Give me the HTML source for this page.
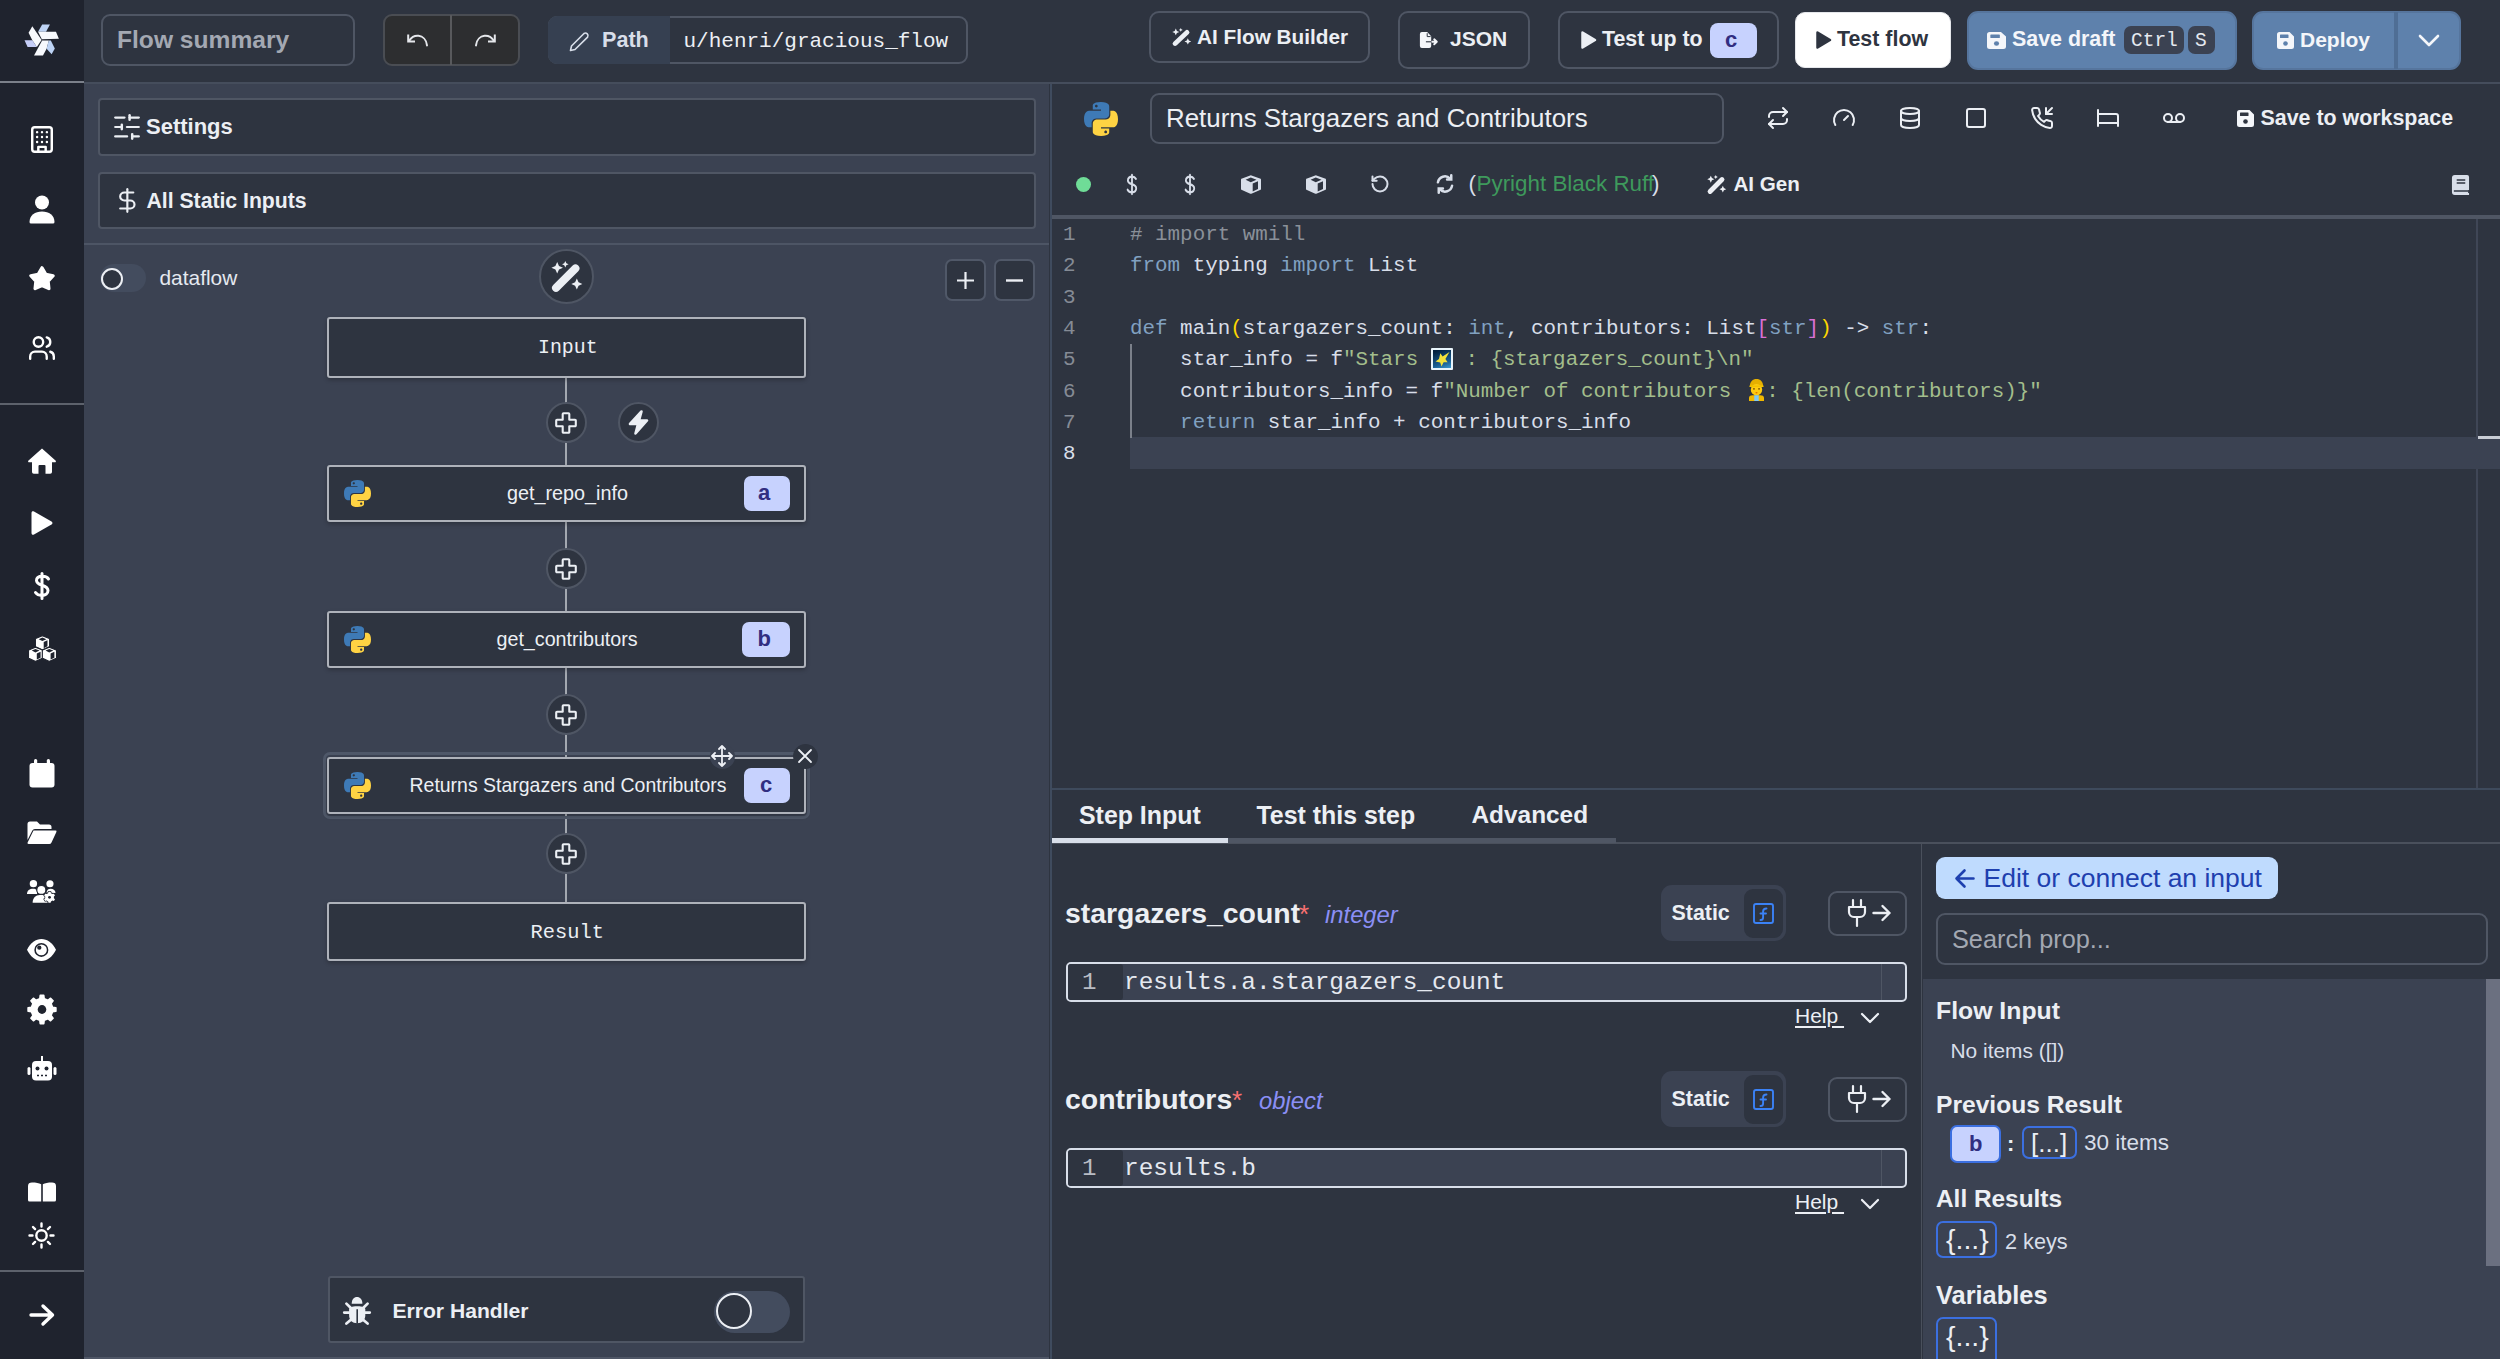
<!DOCTYPE html><html><head><meta charset="utf-8"><title>Flow editor</title>
<style>
html,body{margin:0;padding:0;}
body{width:2500px;height:1359px;overflow:hidden;position:relative;background:#2e3440;font-family:"Liberation Sans",sans-serif;}
.t{position:absolute;line-height:1;white-space:pre;}
.b{position:absolute;box-sizing:border-box;}
.i{position:absolute;overflow:visible;}
</style></head><body>
<div class="b" style="left:0px;top:0px;width:84px;height:1359px;background:#1f232e;"></div>
<div class="b" style="left:0px;top:81px;width:84px;height:2px;background:#7b808a;"></div>
<div class="b" style="left:0px;top:403px;width:84px;height:2px;background:#5d626c;"></div>
<div class="b" style="left:0px;top:1270px;width:84px;height:2px;background:#5d626c;"></div>
<svg class="i" style="left:22px;top:22px;" viewBox="0 0 1431 1359" width="40" height="38" preserveAspectRatio="none" fill="none"><path fill="#bdd3f5" d="M720 90 L1000 90 L860 350 L575 350 Z"/>
<path fill="#f7f9fd" d="M575 350 L1215 350 L1320 600 L710 615 Z"/>
<path fill="#f7f9fd" d="M370 150 L700 640 L530 890 L370 650 L235 385 Z"/>
<path fill="#c5cdf7" d="M90 650 L370 650 L530 890 L200 895 Z"/>
<path fill="#f7f9fd" d="M720 660 L960 660 L880 955 L750 1200 L430 1200 Z"/>
<path fill="#bdd3f5" d="M960 660 L1030 660 L1175 950 L1060 1150 L880 955 Z"/></svg>
<div class="b" style="left:84px;top:0px;width:2416px;height:82px;background:#2e3440;"></div>
<div class="b" style="left:84px;top:82px;width:2416px;height:2px;background:#454d5c;"></div>
<div class="b" style="left:101px;top:14px;width:254px;height:52px;background:#2e3440;border:2px solid #4f5664;border-radius:9px;"></div>
<div class="t" style="left:117.00px;top:28.17px;font-size:24.6px;color:#a3a8b2;font-weight:700;">Flow summary</div>
<div class="b" style="left:383px;top:14px;width:137px;height:52px;background:#2d2e30;border:2px solid #4a4d53;border-radius:9px;"></div>
<div class="b" style="left:450px;top:15px;width:2px;height:50px;background:#58595c;"></div>
<svg class="i" style="left:405px;top:32px;" viewBox="0 0 25 16" width="25" height="16" preserveAspectRatio="none" fill="none" stroke="#e5e7eb" stroke-width="2" stroke-linecap="round" stroke-linejoin="round"><path d="M3.2 2.4 V9.6 H10" stroke-linecap="butt" stroke-linejoin="miter"/><path d="M4.2 8.6 C7 4.5 11 3.5 13.5 3.8 C17.5 4.3 21.5 7.5 22 13.4"/></svg>
<svg class="i" style="left:473px;top:32px;" viewBox="0 0 25 16" width="25" height="16" preserveAspectRatio="none" fill="none" stroke="#e5e7eb" stroke-width="2" stroke-linecap="round" stroke-linejoin="round"><path d="M21.8 2.4 V9.6 H15" stroke-linecap="butt" stroke-linejoin="miter"/><path d="M20.8 8.6 C18 4.5 14 3.5 11.5 3.8 C7.5 4.3 3.5 7.5 3 13.4"/></svg>
<div class="b" style="left:548px;top:16px;width:420px;height:48px;background:#2e3440;border:2px solid #4f5664;border-radius:9px;"></div>
<div class="b" style="left:548px;top:16px;width:122px;height:48px;background:#364051;border-radius:9px;border-top-right-radius:0;border-bottom-right-radius:0;"></div>
<svg class="i" style="left:569px;top:31px;" viewBox="0 0 21 20" width="21" height="20" preserveAspectRatio="none" fill="none" stroke="#d8dee9" stroke-width="1.6" stroke-linecap="round" stroke-linejoin="round"><path d="M15 2.5 a2.6 2.6 0 0 1 3.6 3.6 L6 18.5 L1.5 19.5 L2.5 15 Z"/></svg>
<div class="t" style="left:602.00px;top:28.71px;font-size:21.6px;color:#d8dee9;font-weight:700;">Path</div>
<div class="t" style="left:683.50px;top:31.41px;font-size:21.0px;color:#eceff4;font-family:'Liberation Mono', monospace;">u/henri/gracious_flow</div>
<div class="b" style="left:1149px;top:11px;width:221px;height:52px;background:#2e3440;border:2px solid #4f5664;border-radius:10px;"></div>
<svg class="i" style="left:1172px;top:28px;" viewBox="0 0 18 18" width="19" height="18" preserveAspectRatio="none" fill="#eceff4" stroke="#eceff4" stroke-width="1" stroke-linecap="round" stroke-linejoin="round"><path d="M2.9 15.6 L14.2 4.3" stroke-width="4.6" stroke-linecap="round"/>
<path d="M3.6 0.6 l1.05 2.3 2.3 1.05 -2.3 1.05 -1.05 2.3 -1.05 -2.3 -2.3 -1.05 2.3 -1.05z M8.3 0 l.6 1.3 1.3.6 -1.3.6 -.6 1.3 -.6 -1.3 -1.3 -.6 1.3 -.6z M15 10.2 l1 2.2 2.2 1 -2.2 1 -1 2.2 -1 -2.2 -2.2 -1 2.2 -1z" stroke="none"/></svg>
<div class="t" style="left:1197.00px;top:26.73px;font-size:20.75px;color:#eceff4;font-weight:700;">AI Flow Builder</div>
<div class="b" style="left:1398px;top:11px;width:132px;height:58px;background:#2e3440;border:2px solid #4f5664;border-radius:10px;"></div>
<svg class="i" style="left:1418px;top:30px;" viewBox="0 0 22 19" width="22" height="19" preserveAspectRatio="none" fill="none"><path d="M3.9 2 H9.2 L13.2 6.3 V16 A2 2 0 0 1 11.2 18 H3.9 A2 2 0 0 1 1.9 16 V4 A2 2 0 0 1 3.9 2z" fill="#f4f6fa"/><path d="M9.2 3.2 V6.6 H12.6" stroke="#2e3440" stroke-width="1" fill="none"/><path d="M7.9 11.8 H14" stroke="#2e3440" stroke-width="1.1"/><path d="M14.3 11.8 H18.6 M16.2 9.3 L18.8 11.8 L16.2 14.3" stroke="#f4f6fa" stroke-width="1.9" fill="none" stroke-linecap="round" stroke-linejoin="round"/></svg>
<div class="t" style="left:1450.00px;top:28.22px;font-size:21.0px;color:#eceff4;font-weight:700;">JSON</div>
<div class="b" style="left:1558px;top:11px;width:221px;height:58px;background:#2e3440;border:2px solid #4f5664;border-radius:10px;"></div>
<svg class="i" style="left:1581px;top:31px;" viewBox="0 0 15 18" width="15" height="18" preserveAspectRatio="none" fill="#eceff4" stroke="#eceff4" stroke-width="2.5" stroke-linecap="round" stroke-linejoin="round"><path d="M1.5 1.5 L14 9 L1.5 16.5 Z" stroke-linejoin="round"/></svg>
<div class="t" style="left:1602.00px;top:29.38px;font-size:21.4px;color:#eceff4;font-weight:700;">Test up to</div>
<div class="b" style="left:1710px;top:23px;width:47px;height:35px;background:#c7d2fe;border-radius:8px;"></div>
<div class="t" style="left:1725.00px;top:29.37px;font-size:22px;color:#312e81;font-weight:700;">c</div>
<div class="b" style="left:1795px;top:12px;width:156px;height:56px;background:#ffffff;border:1px solid #e5e7eb;border-radius:10px;"></div>
<svg class="i" style="left:1816px;top:31px;" viewBox="0 0 15 18" width="15" height="18" preserveAspectRatio="none" fill="#2e3440" stroke="#2e3440" stroke-width="2.5" stroke-linecap="round" stroke-linejoin="round"><path d="M1.5 1.5 L14 9 L1.5 16.5 Z"/></svg>
<div class="t" style="left:1837.00px;top:29.38px;font-size:21.4px;color:#2e3440;font-weight:700;">Test flow</div>
<div class="b" style="left:1967px;top:11px;width:270px;height:59px;background:#5e81ac;border:2px solid #56759d;border-radius:11px;"></div>
<svg class="i" style="left:1987px;top:32px;" viewBox="0 0 17 17" width="19" height="17" preserveAspectRatio="none" fill="none"><path d="M0 2.5 a2.5 2.5 0 0 1 2.5 -2.5 h10 l4.5 4.5 v10 a2.5 2.5 0 0 1 -2.5 2.5 h-12 a2.5 2.5 0 0 1 -2.5 -2.5z" fill="#f4f6fa"/><rect x="3" y="2.5" width="8.5" height="3.5" rx=".6" fill="#5e81ac"/><circle cx="8.5" cy="11.5" r="2.3" fill="#5e81ac"/></svg>
<div class="t" style="left:2012.00px;top:28.68px;font-size:21.4px;color:#f4f6fa;font-weight:700;">Save draft</div>
<div class="b" style="left:2124px;top:26px;width:60px;height:28px;background:#3b4252;border-radius:7px;"></div>
<div class="t" style="left:2131.00px;top:32.06px;font-size:19.5px;color:#e5e9f0;font-family:'Liberation Mono', monospace;">Ctrl</div>
<div class="b" style="left:2188px;top:26px;width:27px;height:28px;background:#3b4252;border-radius:7px;"></div>
<div class="t" style="left:2195.00px;top:32.06px;font-size:19.5px;color:#e5e9f0;font-family:'Liberation Mono', monospace;">S</div>
<div class="b" style="left:2252px;top:11px;width:209px;height:59px;background:#5e81ac;border:2px solid #56759d;border-radius:11px;"></div>
<div class="b" style="left:2394px;top:12px;width:4px;height:57px;background:#4f6e95;"></div>
<svg class="i" style="left:2277px;top:32px;" viewBox="0 0 17 17" width="17" height="17" preserveAspectRatio="none" fill="none"><path d="M0 2.5 a2.5 2.5 0 0 1 2.5 -2.5 h10 l4.5 4.5 v10 a2.5 2.5 0 0 1 -2.5 2.5 h-12 a2.5 2.5 0 0 1 -2.5 -2.5z" fill="#f4f6fa"/><rect x="3" y="2.5" width="8.5" height="3.5" rx=".6" fill="#5e81ac"/><circle cx="8.5" cy="11.5" r="2.3" fill="#5e81ac"/></svg>
<div class="t" style="left:2300.00px;top:29.02px;font-size:21.0px;color:#f4f6fa;font-weight:700;">Deploy</div>
<svg class="i" style="left:2418px;top:34px;" viewBox="0 0 22 13" width="22" height="13" preserveAspectRatio="none" fill="none" stroke="#f4f6fa" stroke-width="2.6" stroke-linecap="round" stroke-linejoin="round"><path d="M2 2 L11 11 L20 2"/></svg>
<div class="b" style="left:84px;top:84px;width:965px;height:1275px;background:#3b4252;"></div>
<div class="b" style="left:1049.5px;top:84px;width:2.5px;height:1275px;background:#3f4b5e;"></div>
<div class="b" style="left:98px;top:98px;width:938px;height:58px;background:#2e3440;border:2px solid #4f5664;border-radius:4px;"></div>
<svg class="i" style="left:114px;top:114px;" viewBox="2 1 20 22" width="26" height="26" preserveAspectRatio="none" fill="none" stroke="#eceff4" stroke-width="1.9" stroke-linecap="round" stroke-linejoin="round"><line x1="21" x2="14" y1="4" y2="4"/><line x1="10" x2="3" y1="4" y2="4"/><line x1="21" x2="12" y1="12" y2="12"/><line x1="8" x2="3" y1="12" y2="12"/><line x1="21" x2="16" y1="20" y2="20"/><line x1="12" x2="3" y1="20" y2="20"/><line x1="14" x2="14" y1="2" y2="6"/><line x1="8" x2="8" y1="10" y2="14"/><line x1="16" x2="16" y1="18" y2="22"/></svg>
<div class="t" style="left:146.00px;top:115.67px;font-size:22.0px;color:#eceff4;font-weight:700;">Settings</div>
<div class="b" style="left:98px;top:172px;width:938px;height:57px;background:#2e3440;border:2px solid #4f5664;border-radius:4px;"></div>
<svg class="i" style="left:118.5px;top:188px;" viewBox="5 1 13 22" width="15.5" height="25" preserveAspectRatio="none" fill="none" stroke="#eceff4" stroke-width="1.8" stroke-linecap="round" stroke-linejoin="round"><line x1="12" x2="12" y1="2" y2="22"/><path d="M17 5H9.5a3.5 3.5 0 0 0 0 7h5a3.5 3.5 0 0 1 0 7H6"/></svg>
<div class="t" style="left:146.50px;top:189.55px;font-size:21.2px;color:#eceff4;font-weight:700;">All Static Inputs</div>
<div class="b" style="left:84px;top:243px;width:965px;height:2px;background:#4d5565;"></div>
<div class="b" style="left:100px;top:264px;width:46px;height:28px;background:#434c5e;border-radius:14px;"></div>
<div class="b" style="left:100.5px;top:267.5px;width:22px;height:22px;border-radius:50%;background:#2e3440;border:2.2px solid #eceff4;"></div>
<div class="t" style="left:159.50px;top:267.80px;font-size:20.9px;color:#e5e9f0;">dataflow</div>
<div class="b" style="left:539px;top:249px;width:55px;height:55px;border-radius:50%;background:#2e3440;border:2px solid #4f5664;"></div>
<svg class="i" style="left:551px;top:261px;" viewBox="0 0 18 18" width="31" height="31" preserveAspectRatio="none" fill="#eceff4" stroke="#eceff4" stroke-width="1" stroke-linecap="round" stroke-linejoin="round"><path d="M2.9 15.6 L14.2 4.3" stroke-width="4.6" stroke-linecap="round"/>
<path d="M3.6 0.6 l1.05 2.3 2.3 1.05 -2.3 1.05 -1.05 2.3 -1.05 -2.3 -2.3 -1.05 2.3 -1.05z M8.3 0 l.6 1.3 1.3.6 -1.3.6 -.6 1.3 -.6 -1.3 -1.3 -.6 1.3 -.6z M15 10.2 l1 2.2 2.2 1 -2.2 1 -1 2.2 -1 -2.2 -2.2 -1 2.2 -1z" stroke="none"/></svg>
<div class="b" style="left:945px;top:259px;width:41px;height:42px;background:#2e3440;border:2px solid #505868;border-radius:7px;"></div>
<svg class="i" style="left:957px;top:272px;" viewBox="0 0 17 17" width="17" height="17" preserveAspectRatio="none" fill="none" stroke="#eceff4" stroke-width="2.2" stroke-linecap="round" stroke-linejoin="round"><path d="M8.5 0 v17 M0 8.5 h17" stroke-linecap="butt"/></svg>
<div class="b" style="left:994px;top:259px;width:41px;height:42px;background:#2e3440;border:2px solid #505868;border-radius:7px;"></div>
<svg class="i" style="left:1006px;top:272px;" viewBox="0 0 17 17" width="17" height="17" preserveAspectRatio="none" fill="none" stroke="#eceff4" stroke-width="2.4" stroke-linecap="round" stroke-linejoin="round"><path d="M0 8.5 h17" stroke-linecap="butt"/></svg>
<div class="b" style="left:565px;top:378px;width:2px;height:87px;background:#a3a8b0;"></div>
<div class="b" style="left:565px;top:522px;width:2px;height:89px;background:#a3a8b0;"></div>
<div class="b" style="left:565px;top:668px;width:2px;height:89px;background:#a3a8b0;"></div>
<div class="b" style="left:565px;top:814px;width:2px;height:88px;background:#a3a8b0;"></div>
<div class="b" style="left:327px;top:317px;width:479px;height:61px;background:#2e3440;border:2px solid #aeb2ba;border-radius:3px;box-shadow:0 2px 4px rgba(0,0,0,0.25);"></div>
<div class="t" style="left:538.00px;top:338.26px;font-size:19.9px;color:#eceff4;font-family:'Liberation Mono', monospace;">Input</div>
<div class="b" style="left:327px;top:465px;width:479px;height:57px;background:#2e3440;border:2px solid #aeb2ba;border-radius:3px;box-shadow:0 2px 4px rgba(0,0,0,0.25);"></div>
<svg class="i" style="left:344px;top:480px;" viewBox="0 0 24 24" width="27" height="27" preserveAspectRatio="none" fill="none"><path fill="#3e7ab6" d="M11.9 0C5.8 0 6.2 2.6 6.2 2.6v2.7h5.8v.8H3.9S0 5.7 0 11.9s3.4 6 3.4 6h2v-2.9s-.1-3.4 3.4-3.4h5.8s3.2.1 3.2-3.1V3.2S18.3 0 11.9 0zM8.7 1.9c.6 0 1 .5 1 1s-.5 1-1 1-1-.5-1-1 .4-1 1-1z"/>
<path fill="#ffd343" d="M12.1 24c6.1 0 5.7-2.6 5.7-2.6v-2.7h-5.8v-.8h8.1s3.9.4 3.9-5.8-3.4-6-3.4-6h-2v2.9s.1 3.4-3.4 3.4H9.4s-3.2-.1-3.2 3.1v5.3S5.7 24 12.1 24zm3.2-1.9c-.6 0-1-.5-1-1s.5-1 1-1 1 .5 1 1-.4 1-1 1z"/></svg>
<div class="t" style="left:507.00px;top:483.74px;font-size:19.8px;color:#eceff4;">get_repo_info</div>
<div class="b" style="left:744px;top:476px;width:46px;height:35px;background:#c7d2fe;border-radius:7px;"></div>
<div class="t" style="left:758.00px;top:482.37px;font-size:22px;color:#312e81;font-weight:700;">a</div>
<div class="b" style="left:327px;top:611px;width:479px;height:57px;background:#2e3440;border:2px solid #aeb2ba;border-radius:3px;box-shadow:0 2px 4px rgba(0,0,0,0.25);"></div>
<svg class="i" style="left:344px;top:626px;" viewBox="0 0 24 24" width="27" height="27" preserveAspectRatio="none" fill="none"><path fill="#3e7ab6" d="M11.9 0C5.8 0 6.2 2.6 6.2 2.6v2.7h5.8v.8H3.9S0 5.7 0 11.9s3.4 6 3.4 6h2v-2.9s-.1-3.4 3.4-3.4h5.8s3.2.1 3.2-3.1V3.2S18.3 0 11.9 0zM8.7 1.9c.6 0 1 .5 1 1s-.5 1-1 1-1-.5-1-1 .4-1 1-1z"/>
<path fill="#ffd343" d="M12.1 24c6.1 0 5.7-2.6 5.7-2.6v-2.7h-5.8v-.8h8.1s3.9.4 3.9-5.8-3.4-6-3.4-6h-2v2.9s.1 3.4-3.4 3.4H9.4s-3.2-.1-3.2 3.1v5.3S5.7 24 12.1 24zm3.2-1.9c-.6 0-1-.5-1-1s.5-1 1-1 1 .5 1 1-.4 1-1 1z"/></svg>
<div class="t" style="left:496.50px;top:629.82px;font-size:19.7px;color:#eceff4;">get_contributors</div>
<div class="b" style="left:742px;top:622px;width:48px;height:35px;background:#c7d2fe;border-radius:7px;"></div>
<div class="t" style="left:757.50px;top:628.37px;font-size:22px;color:#312e81;font-weight:700;">b</div>
<div class="b" style="left:323px;top:752px;width:487px;height:67px;background:transparent;border:3px solid #4f5869;border-radius:7px;"></div>
<div class="b" style="left:327px;top:757px;width:479px;height:57px;background:#2e3440;border:2px solid #aeb2ba;border-radius:3px;box-shadow:0 2px 4px rgba(0,0,0,0.25);"></div>
<svg class="i" style="left:344px;top:772px;" viewBox="0 0 24 24" width="27" height="27" preserveAspectRatio="none" fill="none"><path fill="#3e7ab6" d="M11.9 0C5.8 0 6.2 2.6 6.2 2.6v2.7h5.8v.8H3.9S0 5.7 0 11.9s3.4 6 3.4 6h2v-2.9s-.1-3.4 3.4-3.4h5.8s3.2.1 3.2-3.1V3.2S18.3 0 11.9 0zM8.7 1.9c.6 0 1 .5 1 1s-.5 1-1 1-1-.5-1-1 .4-1 1-1z"/>
<path fill="#ffd343" d="M12.1 24c6.1 0 5.7-2.6 5.7-2.6v-2.7h-5.8v-.8h8.1s3.9.4 3.9-5.8-3.4-6-3.4-6h-2v2.9s.1 3.4-3.4 3.4H9.4s-3.2-.1-3.2 3.1v5.3S5.7 24 12.1 24zm3.2-1.9c-.6 0-1-.5-1-1s.5-1 1-1 1 .5 1 1-.4 1-1 1z"/></svg>
<div class="t" style="left:409.50px;top:776.01px;font-size:19.48px;color:#eceff4;">Returns Stargazers and Contributors</div>
<div class="b" style="left:744px;top:768px;width:46px;height:35px;background:#c7d2fe;border-radius:7px;"></div>
<div class="t" style="left:760.00px;top:774.37px;font-size:22px;color:#312e81;font-weight:700;">c</div>
<div class="b" style="left:709.5px;top:743.5px;width:25px;height:25px;border-radius:50%;background:#3b4252;"></div>
<svg class="i" style="left:711px;top:745px;" viewBox="0 0 22 22" width="22" height="22" preserveAspectRatio="none" fill="none" stroke="#eceff4" stroke-width="1.8" stroke-linecap="round" stroke-linejoin="round"><path d="M11 1 v20 M1 11 h20 M8 4 l3 -3 3 3 M8 18 l3 3 3 -3 M4 8 l-3 3 3 3 M18 8 l3 3 -3 3"/></svg>
<div class="b" style="left:792.5px;top:743.5px;width:25px;height:25px;border-radius:50%;background:#2e3440;"></div>
<svg class="i" style="left:798px;top:749px;" viewBox="0 0 14 14" width="14" height="14" preserveAspectRatio="none" fill="none" stroke="#eceff4" stroke-width="1.8" stroke-linecap="round" stroke-linejoin="round"><path d="M1 1 L13 13 M13 1 L1 13"/></svg>
<div class="b" style="left:327px;top:902px;width:479px;height:59px;background:#2e3440;border:2px solid #aeb2ba;border-radius:3px;box-shadow:0 2px 4px rgba(0,0,0,0.25);"></div>
<div class="t" style="left:530.50px;top:922.87px;font-size:20.4px;color:#eceff4;font-family:'Liberation Mono', monospace;">Result</div>
<div class="b" style="left:545.5px;top:401.5px;width:41px;height:41px;border-radius:50%;background:#2e3440;border:2px solid #4f5664;"></div>
<svg class="i" style="left:556px;top:412px;" viewBox="0 0 20 20" width="20" height="20" preserveAspectRatio="none" fill="none" stroke="#eceff4" stroke-width="2.1" stroke-linecap="round" stroke-linejoin="round"><path d="M7.5 1.2 h5 a.8 .8 0 0 1 .8 .8 v5.7 h5.7 a.8 .8 0 0 1 .8 .8 v5 a.8 .8 0 0 1 -.8 .8 h-5.7 v5.7 a.8 .8 0 0 1 -.8 .8 h-5 a.8 .8 0 0 1 -.8 -.8 v-5.7 h-5.7 a.8 .8 0 0 1 -.8 -.8 v-5 a.8 .8 0 0 1 .8 -.8 h5.7 v-5.7 a.8 .8 0 0 1 .8 -.8z"/></svg>
<div class="b" style="left:545.5px;top:547.5px;width:41px;height:41px;border-radius:50%;background:#2e3440;border:2px solid #4f5664;"></div>
<svg class="i" style="left:556px;top:558px;" viewBox="0 0 20 20" width="20" height="20" preserveAspectRatio="none" fill="none" stroke="#eceff4" stroke-width="2.1" stroke-linecap="round" stroke-linejoin="round"><path d="M7.5 1.2 h5 a.8 .8 0 0 1 .8 .8 v5.7 h5.7 a.8 .8 0 0 1 .8 .8 v5 a.8 .8 0 0 1 -.8 .8 h-5.7 v5.7 a.8 .8 0 0 1 -.8 .8 h-5 a.8 .8 0 0 1 -.8 -.8 v-5.7 h-5.7 a.8 .8 0 0 1 -.8 -.8 v-5 a.8 .8 0 0 1 .8 -.8 h5.7 v-5.7 a.8 .8 0 0 1 .8 -.8z"/></svg>
<div class="b" style="left:545.5px;top:693.5px;width:41px;height:41px;border-radius:50%;background:#2e3440;border:2px solid #4f5664;"></div>
<svg class="i" style="left:556px;top:704px;" viewBox="0 0 20 20" width="20" height="20" preserveAspectRatio="none" fill="none" stroke="#eceff4" stroke-width="2.1" stroke-linecap="round" stroke-linejoin="round"><path d="M7.5 1.2 h5 a.8 .8 0 0 1 .8 .8 v5.7 h5.7 a.8 .8 0 0 1 .8 .8 v5 a.8 .8 0 0 1 -.8 .8 h-5.7 v5.7 a.8 .8 0 0 1 -.8 .8 h-5 a.8 .8 0 0 1 -.8 -.8 v-5.7 h-5.7 a.8 .8 0 0 1 -.8 -.8 v-5 a.8 .8 0 0 1 .8 -.8 h5.7 v-5.7 a.8 .8 0 0 1 .8 -.8z"/></svg>
<div class="b" style="left:545.5px;top:832.5px;width:41px;height:41px;border-radius:50%;background:#2e3440;border:2px solid #4f5664;"></div>
<svg class="i" style="left:556px;top:843px;" viewBox="0 0 20 20" width="20" height="20" preserveAspectRatio="none" fill="none" stroke="#eceff4" stroke-width="2.1" stroke-linecap="round" stroke-linejoin="round"><path d="M7.5 1.2 h5 a.8 .8 0 0 1 .8 .8 v5.7 h5.7 a.8 .8 0 0 1 .8 .8 v5 a.8 .8 0 0 1 -.8 .8 h-5.7 v5.7 a.8 .8 0 0 1 -.8 .8 h-5 a.8 .8 0 0 1 -.8 -.8 v-5.7 h-5.7 a.8 .8 0 0 1 -.8 -.8 v-5 a.8 .8 0 0 1 .8 -.8 h5.7 v-5.7 a.8 .8 0 0 1 .8 -.8z"/></svg>
<div class="b" style="left:617.5px;top:401.5px;width:41px;height:41px;border-radius:50%;background:#2e3440;border:2px solid #4f5664;"></div>
<svg class="i" style="left:628px;top:410px;" viewBox="0 0 21 25" width="21" height="25" preserveAspectRatio="none" fill="#eceff4" stroke="#eceff4" stroke-width="2.6" stroke-linecap="round" stroke-linejoin="round"><path d="M13.5 1.5 L2 14 H10 L7.5 23.5 L19 10.5 H11 Z"/></svg>
<div class="b" style="left:328px;top:1276px;width:477px;height:67px;background:#2e3440;border:2px solid #4f5664;border-radius:3px;"></div>
<svg class="i" style="left:343px;top:1297px;" viewBox="0 0 28 29" width="28" height="29" preserveAspectRatio="none" fill="#eceff4"><path d="M8.7 6.7 C8.7 2.3 11 0 14 0 S19.4 2.3 19.4 6.7 z"/>
<path d="M6.1 12.5 C6.1 10.5 8.5 9.2 14.2 9.2 S22.3 10.5 22.3 12.5 V18 C22.3 23.5 19 26.2 14.2 26.2 S6.1 23.5 6.1 18z"/>
<path d="M3.4 6.6 L7.6 10.8 M24.6 6.6 L20.4 10.8 M1.2 15.6 H6.5 M26.8 15.6 H21.5 M3.4 26.6 L7.6 23 M24.6 26.6 L20.4 23" stroke="#eceff4" stroke-width="2.7" stroke-linecap="round"/>
<path d="M14.2 12.3 v14.5" stroke="#2e3440" stroke-width="1.6"/></svg>
<div class="t" style="left:392.50px;top:1300.13px;font-size:21.1px;color:#eceff4;font-weight:700;">Error Handler</div>
<div class="b" style="left:714px;top:1291px;width:76px;height:42px;background:#434c5e;border-radius:21px;"></div>
<div class="b" style="left:716px;top:1293px;width:36px;height:36px;border-radius:50%;background:#2e3440;border:2.5px solid #eceff4;"></div>
<div class="b" style="left:1052px;top:84px;width:1448px;height:1275px;background:#2e3440;"></div>
<svg class="i" style="left:1084px;top:102px;" viewBox="0 0 24 24" width="34" height="34" preserveAspectRatio="none" fill="none"><path fill="#3e7ab6" d="M11.9 0C5.8 0 6.2 2.6 6.2 2.6v2.7h5.8v.8H3.9S0 5.7 0 11.9s3.4 6 3.4 6h2v-2.9s-.1-3.4 3.4-3.4h5.8s3.2.1 3.2-3.1V3.2S18.3 0 11.9 0zM8.7 1.9c.6 0 1 .5 1 1s-.5 1-1 1-1-.5-1-1 .4-1 1-1z"/>
<path fill="#ffd343" d="M12.1 24c6.1 0 5.7-2.6 5.7-2.6v-2.7h-5.8v-.8h8.1s3.9.4 3.9-5.8-3.4-6-3.4-6h-2v2.9s.1 3.4-3.4 3.4H9.4s-3.2-.1-3.2 3.1v5.3S5.7 24 12.1 24zm3.2-1.9c-.6 0-1-.5-1-1s.5-1 1-1 1 .5 1 1-.4 1-1 1z"/></svg>
<div class="b" style="left:1150px;top:93px;width:574px;height:51px;background:#2e3440;border:2px solid #4f5664;border-radius:9px;"></div>
<div class="t" style="left:1166.00px;top:105.57px;font-size:25.9px;color:#eceff4;">Returns Stargazers and Contributors</div>
<svg class="i" style="left:1766px;top:106px;" viewBox="0 0 24 24" width="24" height="24" preserveAspectRatio="none" fill="none" stroke="#eceff4" stroke-width="2" stroke-linecap="round" stroke-linejoin="round"><path d="m17 2 4 4-4 4"/><path d="M3 11v-1a4 4 0 0 1 4-4h14"/><path d="m7 22-4-4 4-4"/><path d="M21 13v1a4 4 0 0 1-4 4H3"/></svg>
<svg class="i" style="left:1832px;top:106px;" viewBox="0 0 24 24" width="24" height="24" preserveAspectRatio="none" fill="none" stroke="#eceff4" stroke-width="2" stroke-linecap="round" stroke-linejoin="round"><path d="m12 14 4-4"/><path d="M3.34 19a10 10 0 1 1 17.32 0"/></svg>
<svg class="i" style="left:1898px;top:106px;" viewBox="0 0 24 24" width="24" height="24" preserveAspectRatio="none" fill="none" stroke="#eceff4" stroke-width="2" stroke-linecap="round" stroke-linejoin="round"><ellipse cx="12" cy="5" rx="9" ry="3"/><path d="M3 5V19A9 3 0 0 0 21 19V5"/><path d="M3 12A9 3 0 0 0 21 12"/></svg>
<svg class="i" style="left:1964px;top:106px;" viewBox="0 0 24 24" width="24" height="24" preserveAspectRatio="none" fill="none" stroke="#eceff4" stroke-width="2" stroke-linecap="round" stroke-linejoin="round"><rect width="18" height="18" x="3" y="3" rx="2"/></svg>
<svg class="i" style="left:2030px;top:106px;" viewBox="0 0 24 24" width="24" height="24" preserveAspectRatio="none" fill="none" stroke="#eceff4" stroke-width="2" stroke-linecap="round" stroke-linejoin="round"><polyline points="16 2 16 8 22 8"/><line x1="22" x2="16" y1="2" y2="8"/><path d="M22 16.92v3a2 2 0 0 1-2.18 2 19.79 19.79 0 0 1-8.63-3.07 19.5 19.5 0 0 1-6-6 19.79 19.79 0 0 1-3.07-8.67A2 2 0 0 1 4.11 2h3a2 2 0 0 1 2 1.72 12.84 12.84 0 0 0 .7 2.81 2 2 0 0 1-.45 2.11L8.09 9.91a16 16 0 0 0 6 6l1.27-1.27a2 2 0 0 1 2.11-.45 12.84 12.84 0 0 0 2.81.7A2 2 0 0 1 22 16.92z"/></svg>
<svg class="i" style="left:2096px;top:106px;" viewBox="0 0 24 24" width="24" height="24" preserveAspectRatio="none" fill="none" stroke="#eceff4" stroke-width="2" stroke-linecap="round" stroke-linejoin="round"><path d="M2 4v16"/><path d="M2 8h18a2 2 0 0 1 2 2v10"/><path d="M2 17h20"/></svg>
<svg class="i" style="left:2162px;top:106px;" viewBox="0 0 24 24" width="24" height="24" preserveAspectRatio="none" fill="none" stroke="#eceff4" stroke-width="2" stroke-linecap="round" stroke-linejoin="round"><circle cx="6" cy="12" r="4"/><circle cx="18" cy="12" r="4"/><line x1="6" x2="18" y1="16" y2="16"/></svg>
<svg class="i" style="left:2237px;top:110px;" viewBox="0 0 17 17" width="17" height="17" preserveAspectRatio="none" fill="none"><path d="M0 2.5 a2.5 2.5 0 0 1 2.5 -2.5 h10 l4.5 4.5 v10 a2.5 2.5 0 0 1 -2.5 2.5 h-12 a2.5 2.5 0 0 1 -2.5 -2.5z" fill="#f4f6fa"/><rect x="3" y="2.5" width="8.5" height="3.5" rx=".6" fill="#2e3440"/><circle cx="8.5" cy="11.5" r="2.3" fill="#2e3440"/></svg>
<div class="t" style="left:2260.50px;top:107.68px;font-size:21.4px;color:#eceff4;font-weight:700;">Save to workspace</div>
<div class="b" style="left:1076px;top:177px;width:15px;height:15px;border-radius:50%;background:#6fdc97;"></div>
<svg class="i" style="left:1125px;top:175px;" viewBox="0 0 16 17.6" width="14" height="19" preserveAspectRatio="none" fill="none" stroke="#d8dee9" stroke-width="2.1" stroke-linecap="round" stroke-linejoin="round"><path d="M12.5 3.5 C11.5 2 10 1.6 8 1.6 C5 1.6 3.3 3 3.3 5.1 C3.3 9.5 12.8 7.5 12.8 12.3 C12.8 14.6 10.8 16 8 16 C5.6 16 4 15.3 3 13.7 M8 0 V17.6"/></svg>
<svg class="i" style="left:1183px;top:175px;" viewBox="0 0 16 17.6" width="14" height="19" preserveAspectRatio="none" fill="none" stroke="#d8dee9" stroke-width="2.1" stroke-linecap="round" stroke-linejoin="round"><path d="M12.5 3.5 C11.5 2 10 1.6 8 1.6 C5 1.6 3.3 3 3.3 5.1 C3.3 9.5 12.8 7.5 12.8 12.3 C12.8 14.6 10.8 16 8 16 C5.6 16 4 15.3 3 13.7 M8 0 V17.6"/></svg>
<svg class="i" style="left:1241px;top:175px;" viewBox="0 0 20 19.3" width="20" height="19" preserveAspectRatio="none" fill="none"><path d="M9.8 0.3 L19.6 3.9 Q20 4.1 20 4.6 V14.2 Q20 14.7 19.6 14.9 L10.3 19 Q9.8 19.2 9.3 19 L0.4 14.9 Q0 14.7 0 14.2 V4.6 Q0 4.1 0.4 3.9 Z" fill="#d8dee9"/><path d="M4.6 4.8 L9.8 2.5 L15.5 4.8 L9.8 7.3 Z M11.7 8.7 L17 6.3 V14.2 L11.7 16.8 Z" fill="#2e3440"/></svg>
<svg class="i" style="left:1306px;top:175px;" viewBox="0 0 20 19.3" width="20" height="19" preserveAspectRatio="none" fill="none"><path d="M9.8 0.3 L19.6 3.9 Q20 4.1 20 4.6 V14.2 Q20 14.7 19.6 14.9 L10.3 19 Q9.8 19.2 9.3 19 L0.4 14.9 Q0 14.7 0 14.2 V4.6 Q0 4.1 0.4 3.9 Z" fill="#d8dee9"/><path d="M4.6 4.8 L9.8 2.5 L15.5 4.8 L9.8 7.3 Z M11.7 8.7 L17 6.3 V14.2 L11.7 16.8 Z" fill="#2e3440"/></svg>
<svg class="i" style="left:1370px;top:174px;" viewBox="0 0 24 24" width="20" height="20" preserveAspectRatio="none" fill="none" stroke="#d8dee9" stroke-width="2.4" stroke-linecap="round" stroke-linejoin="round"><path d="M3 12a9 9 0 1 0 9-9 9.75 9.75 0 0 0-6.74 2.74L3 8"/><path d="M3 3v5h5"/></svg>
<svg class="i" style="left:1435px;top:174px;" viewBox="0 0 24 24" width="20" height="20" preserveAspectRatio="none" fill="none" stroke="#d8dee9" stroke-width="3" stroke-linecap="round" stroke-linejoin="round"><path d="M3.5 10 A8.5 8.5 0 0 1 18 5.5 M20.5 14 A8.5 8.5 0 0 1 6 18.5"/><path d="M19.5 1.5 V6.5 H14.5 M4.5 22.5 V17.5 H9.5" stroke-linejoin="miter"/></svg>
<div class="t" style="left:1468.50px;top:172.53px;font-size:22.4px;color:#d8dee9;">(</div>
<div class="t" style="left:1476.50px;top:172.53px;font-size:22.4px;color:#3e9a5c;">Pyright Black Ruff</div>
<div class="t" style="left:1652.00px;top:172.53px;font-size:22.4px;color:#d8dee9;">)</div>
<svg class="i" style="left:1707px;top:175px;" viewBox="0 0 18 18" width="19" height="19" preserveAspectRatio="none" fill="#eceff4" stroke="#eceff4" stroke-width="1" stroke-linecap="round" stroke-linejoin="round"><path d="M2.9 15.6 L14.2 4.3" stroke-width="4.6" stroke-linecap="round"/>
<path d="M3.6 0.6 l1.05 2.3 2.3 1.05 -2.3 1.05 -1.05 2.3 -1.05 -2.3 -2.3 -1.05 2.3 -1.05z M8.3 0 l.6 1.3 1.3.6 -1.3.6 -.6 1.3 -.6 -1.3 -1.3 -.6 1.3 -.6z M15 10.2 l1 2.2 2.2 1 -2.2 1 -1 2.2 -1 -2.2 -2.2 -1 2.2 -1z" stroke="none"/></svg>
<div class="t" style="left:1733.50px;top:174.06px;font-size:20.6px;color:#eceff4;font-weight:700;">AI Gen</div>
<svg class="i" style="left:2451px;top:175px;" viewBox="0 0 20 20" width="19" height="20" preserveAspectRatio="none" fill="none"><path d="M3 0 h14 a2 2 0 0 1 2 2 v13 h-1 v3 h1 v2 h-15 a3 3 0 0 1 -3 -3 v-14 a3 3 0 0 1 3 -3z" fill="#d8dee9"/><path d="M6 5 h9 M6 8 h9" stroke="#2e3440" stroke-width="1.5"/><path d="M3 16 h15" stroke="#2e3440" stroke-width="1.5"/></svg>
<div class="b" style="left:1052px;top:215px;width:1448px;height:4px;background:#4f5664;"></div>
<div class="b" style="left:2476px;top:219px;width:2px;height:569px;background:#3f4656;"></div>
<div class="b" style="left:1130px;top:437px;width:1370px;height:32px;background:#3b4252;"></div>
<div class="b" style="left:2478px;top:436px;width:22px;height:3px;background:#c8ccd4;"></div>
<div class="b" style="left:1130px;top:344px;width:2px;height:94px;background:#7b808a;"></div>
<div class="t" style="left:1063.00px;top:225.01px;font-size:20.88px;color:#858b95;font-family:'Liberation Mono', monospace;">1</div>
<div class="t" style="left:1130.00px;top:225.01px;font-size:20.88px;color:#8a9099;font-family:'Liberation Mono', monospace;"># import wmill</div>
<div class="t" style="left:1063.00px;top:256.34px;font-size:20.88px;color:#858b95;font-family:'Liberation Mono', monospace;">2</div>
<div class="t" style="left:1130.00px;top:256.34px;font-size:20.88px;color:#81a1c1;font-family:'Liberation Mono', monospace;">from</div>
<div class="t" style="left:1180.12px;top:256.34px;font-size:20.88px;color:#d8dee9;font-family:'Liberation Mono', monospace;"> typing </div>
<div class="t" style="left:1280.36px;top:256.34px;font-size:20.88px;color:#81a1c1;font-family:'Liberation Mono', monospace;">import</div>
<div class="t" style="left:1355.54px;top:256.34px;font-size:20.88px;color:#d8dee9;font-family:'Liberation Mono', monospace;"> List</div>
<div class="t" style="left:1063.00px;top:287.67px;font-size:20.88px;color:#858b95;font-family:'Liberation Mono', monospace;">3</div>
<div class="t" style="left:1063.00px;top:319.00px;font-size:20.88px;color:#858b95;font-family:'Liberation Mono', monospace;">4</div>
<div class="t" style="left:1130.00px;top:319.00px;font-size:20.88px;color:#81a1c1;font-family:'Liberation Mono', monospace;">def</div>
<div class="t" style="left:1167.59px;top:319.00px;font-size:20.88px;color:#d8dee9;font-family:'Liberation Mono', monospace;"> main</div>
<div class="t" style="left:1230.24px;top:319.00px;font-size:20.88px;color:#ffd700;font-family:'Liberation Mono', monospace;">(</div>
<div class="t" style="left:1242.77px;top:319.00px;font-size:20.88px;color:#d8dee9;font-family:'Liberation Mono', monospace;">stargazers_count: </div>
<div class="t" style="left:1468.31px;top:319.00px;font-size:20.88px;color:#81a1c1;font-family:'Liberation Mono', monospace;">int</div>
<div class="t" style="left:1505.90px;top:319.00px;font-size:20.88px;color:#d8dee9;font-family:'Liberation Mono', monospace;">, contributors: List</div>
<div class="t" style="left:1756.49px;top:319.00px;font-size:20.88px;color:#da70d6;font-family:'Liberation Mono', monospace;">[</div>
<div class="t" style="left:1769.02px;top:319.00px;font-size:20.88px;color:#81a1c1;font-family:'Liberation Mono', monospace;">str</div>
<div class="t" style="left:1806.61px;top:319.00px;font-size:20.88px;color:#da70d6;font-family:'Liberation Mono', monospace;">]</div>
<div class="t" style="left:1819.14px;top:319.00px;font-size:20.88px;color:#ffd700;font-family:'Liberation Mono', monospace;">)</div>
<div class="t" style="left:1831.67px;top:319.00px;font-size:20.88px;color:#d8dee9;font-family:'Liberation Mono', monospace;"> -&gt; </div>
<div class="t" style="left:1881.79px;top:319.00px;font-size:20.88px;color:#81a1c1;font-family:'Liberation Mono', monospace;">str</div>
<div class="t" style="left:1919.38px;top:319.00px;font-size:20.88px;color:#d8dee9;font-family:'Liberation Mono', monospace;">:</div>
<div class="t" style="left:1063.00px;top:350.33px;font-size:20.88px;color:#858b95;font-family:'Liberation Mono', monospace;">5</div>
<div class="t" style="left:1130.00px;top:350.33px;font-size:20.88px;color:#d8dee9;font-family:'Liberation Mono', monospace;">    star_info = f</div>
<div class="t" style="left:1343.01px;top:350.33px;font-size:20.88px;color:#a3be8c;font-family:'Liberation Mono', monospace;">&quot;Stars </div>
<div class="t" style="left:1452.92px;top:350.33px;font-size:20.88px;color:#a3be8c;font-family:'Liberation Mono', monospace;"> : {stargazers_count}\n&quot;</div>
<div class="t" style="left:1063.00px;top:381.66px;font-size:20.88px;color:#858b95;font-family:'Liberation Mono', monospace;">6</div>
<div class="t" style="left:1130.00px;top:381.66px;font-size:20.88px;color:#d8dee9;font-family:'Liberation Mono', monospace;">    contributors_info = f</div>
<div class="t" style="left:1443.25px;top:381.66px;font-size:20.88px;color:#a3be8c;font-family:'Liberation Mono', monospace;">&quot;Number of contributors </div>
<div class="t" style="left:1766.16px;top:381.66px;font-size:20.88px;color:#a3be8c;font-family:'Liberation Mono', monospace;">: {len(contributors)}&quot;</div>
<div class="t" style="left:1063.00px;top:412.99px;font-size:20.88px;color:#858b95;font-family:'Liberation Mono', monospace;">7</div>
<div class="t" style="left:1130.00px;top:412.99px;font-size:20.88px;color:#81a1c1;font-family:'Liberation Mono', monospace;">    return</div>
<div class="t" style="left:1255.30px;top:412.99px;font-size:20.88px;color:#d8dee9;font-family:'Liberation Mono', monospace;"> star_info + contributors_info</div>
<div class="t" style="left:1063.00px;top:444.32px;font-size:20.88px;color:#d8dee9;font-family:'Liberation Mono', monospace;">8</div>
<div class="b" style="left:1431px;top:348px;width:22px;height:22px;background:linear-gradient(160deg,#02203f 10%,#1a5f93 70%,#3a9ad0);border:2.2px solid #e9f4fb;border-radius:1px;"></div>
<svg class="i" style="left:1434px;top:351px;" viewBox="0 0 16 16" width="16" height="16" preserveAspectRatio="none" fill="none"><path d="M6.3 2.2 L8.6 5.6 L15.5 1 L11.4 8 L13.6 11.2 L9.6 11.3 L7.5 15.6 L6.2 11.6 L1.5 10.6 L5 8 Z" fill="#f2e23a"/></svg>
<svg class="i" style="left:1749px;top:379px;" viewBox="0 0 14.2 21.7" width="15" height="22" preserveAspectRatio="none" fill="none"><path d="M0.8 7.5 C0.8 2.5 3.5 0 7.1 0 S13.4 2.5 13.4 7.5 Z" fill="#e6b000"/><ellipse cx="7.1" cy="10.6" rx="5.4" ry="5.6" fill="#ffcb10"/><rect x="0.3" y="6.4" width="13.6" height="1.4" rx=".7" fill="#f2c200"/><circle cx="4.7" cy="9.8" r=".8" fill="#6a4500"/><circle cx="9.5" cy="9.8" r=".8" fill="#6a4500"/><ellipse cx="7.1" cy="13.6" rx="1" ry=".8" fill="#e06a00"/><path d="M0 21.7 V18.5 C0 16.8 1.5 16 3.5 16 H10.7 C12.7 16 14.2 16.8 14.2 18.5 V21.7 Z" fill="#f0b800"/><rect x="5" y="16" width="4.2" height="5.7" fill="#7fcaf5"/></svg>
<div class="b" style="left:1052px;top:788px;width:1448px;height:2px;background:#3e4a5c;"></div>
<div class="t" style="left:1079.00px;top:802.72px;font-size:24.9px;color:#eceff4;font-weight:700;">Step Input</div>
<div class="t" style="left:1256.50px;top:802.72px;font-size:24.9px;color:#eceff4;font-weight:700;">Test this step</div>
<div class="t" style="left:1471.50px;top:803.14px;font-size:24.4px;color:#eceff4;font-weight:700;">Advanced</div>
<div class="b" style="left:1052px;top:842px;width:1448px;height:2px;background:#4a505c;"></div>
<div class="b" style="left:1228px;top:838px;width:388px;height:5px;background:#4f5664;"></div>
<div class="b" style="left:1052px;top:838px;width:176px;height:5px;background:#d8dee9;"></div>
<div class="b" style="left:1921px;top:844px;width:1px;height:515px;background:#4a505c;"></div>
<div class="t" style="left:1065.00px;top:898.75px;font-size:28.4px;color:#eceff4;font-weight:700;">stargazers_count</div>
<div class="t" style="left:1299.00px;top:900.79px;font-size:26px;color:#f87171;">*</div>
<div class="t" style="left:1325.00px;top:902.65px;font-size:23.8px;color:#8b8ff5;font-style:italic;">integer</div>
<div class="b" style="left:1661px;top:885px;width:125px;height:56px;background:#3b4252;border-radius:11px;"></div>
<div class="t" style="left:1671.50px;top:902.68px;font-size:21.4px;color:#eceff4;font-weight:700;">Static</div>
<div class="b" style="left:1744px;top:889px;width:39px;height:49px;background:#2e3440;border-radius:9px;"></div>
<svg class="i" style="left:1752px;top:902px;" viewBox="0 0 23 23" width="23" height="23" preserveAspectRatio="none" fill="none" stroke="#3b82f6" stroke-width="1.9" stroke-linecap="round" stroke-linejoin="round"><rect x="2" y="2" width="19" height="19" rx="2"/><path d="M8.5 18 c2 0 2.6-1 2.6-2.6 V9.5 c0-2 1-3 3.4-3 M8.5 11.5 h5.5"/></svg>
<div class="b" style="left:1828px;top:891px;width:79px;height:45px;background:#2e3440;border:2px solid #4f5664;border-radius:9px;"></div>
<svg class="i" style="left:1847px;top:899px;" viewBox="0 0 20 28" width="20" height="28" preserveAspectRatio="none" fill="none" stroke="#eceff4" stroke-width="2.2" stroke-linecap="round" stroke-linejoin="round"><path d="M6 1 v7 M14 1 v7 M2 8 h16 v5 a5 5 0 0 1 -5 5 h-6 a5 5 0 0 1 -5 -5z M10 18 v9"/></svg>
<svg class="i" style="left:1872px;top:904px;" viewBox="0 0 19 18" width="19" height="18" preserveAspectRatio="none" fill="none" stroke="#eceff4" stroke-width="2.4" stroke-linecap="round" stroke-linejoin="round"><path d="M1.5 9 h16 M10.5 2 l7 7 -7 7"/></svg>
<div class="b" style="left:1066px;top:962px;width:841px;height:40px;background:#3b4252;border:2px solid #d8dee9;border-radius:5px;"></div>
<div class="b" style="left:1068px;top:964px;width:55px;height:36px;background:#2e3440;border-radius:3px;"></div>
<div class="b" style="left:1881px;top:964px;width:1px;height:36px;background:#4f5664;"></div>
<div class="t" style="left:1082.00px;top:971.46px;font-size:24.2px;color:#b8bcc4;font-family:'Liberation Mono', monospace;">1</div>
<div class="t" style="left:1124.00px;top:971.27px;font-size:24.45px;color:#e5e9f0;font-family:'Liberation Mono', monospace;">results.a.stargazers_count</div>
<div class="t" style="left:1795.00px;top:1004.52px;font-size:21.0px;color:#eceff4;text-decoration:underline;text-underline-offset:3px;text-decoration-thickness:1.5px;">Help </div>
<svg class="i" style="left:1860px;top:1012px;" viewBox="0 0 20 12" width="20" height="12" preserveAspectRatio="none" fill="none" stroke="#eceff4" stroke-width="2.2" stroke-linecap="round" stroke-linejoin="round"><path d="M2 2 L10 10 L18 2"/></svg>
<div class="t" style="left:1065.00px;top:1084.75px;font-size:28.4px;color:#eceff4;font-weight:700;">contributors</div>
<div class="t" style="left:1232.00px;top:1086.79px;font-size:26px;color:#f87171;">*</div>
<div class="t" style="left:1259.00px;top:1088.65px;font-size:23.8px;color:#8b8ff5;font-style:italic;">object</div>
<div class="b" style="left:1661px;top:1071px;width:125px;height:56px;background:#3b4252;border-radius:11px;"></div>
<div class="t" style="left:1671.50px;top:1088.68px;font-size:21.4px;color:#eceff4;font-weight:700;">Static</div>
<div class="b" style="left:1744px;top:1075px;width:39px;height:49px;background:#2e3440;border-radius:9px;"></div>
<svg class="i" style="left:1752px;top:1088px;" viewBox="0 0 23 23" width="23" height="23" preserveAspectRatio="none" fill="none" stroke="#3b82f6" stroke-width="1.9" stroke-linecap="round" stroke-linejoin="round"><rect x="2" y="2" width="19" height="19" rx="2"/><path d="M8.5 18 c2 0 2.6-1 2.6-2.6 V9.5 c0-2 1-3 3.4-3 M8.5 11.5 h5.5"/></svg>
<div class="b" style="left:1828px;top:1077px;width:79px;height:45px;background:#2e3440;border:2px solid #4f5664;border-radius:9px;"></div>
<svg class="i" style="left:1847px;top:1085px;" viewBox="0 0 20 28" width="20" height="28" preserveAspectRatio="none" fill="none" stroke="#eceff4" stroke-width="2.2" stroke-linecap="round" stroke-linejoin="round"><path d="M6 1 v7 M14 1 v7 M2 8 h16 v5 a5 5 0 0 1 -5 5 h-6 a5 5 0 0 1 -5 -5z M10 18 v9"/></svg>
<svg class="i" style="left:1872px;top:1090px;" viewBox="0 0 19 18" width="19" height="18" preserveAspectRatio="none" fill="none" stroke="#eceff4" stroke-width="2.4" stroke-linecap="round" stroke-linejoin="round"><path d="M1.5 9 h16 M10.5 2 l7 7 -7 7"/></svg>
<div class="b" style="left:1066px;top:1148px;width:841px;height:40px;background:#3b4252;border:2px solid #d8dee9;border-radius:5px;"></div>
<div class="b" style="left:1068px;top:1150px;width:55px;height:36px;background:#2e3440;border-radius:3px;"></div>
<div class="b" style="left:1881px;top:1150px;width:1px;height:36px;background:#4f5664;"></div>
<div class="t" style="left:1082.00px;top:1157.46px;font-size:24.2px;color:#b8bcc4;font-family:'Liberation Mono', monospace;">1</div>
<div class="t" style="left:1124.00px;top:1157.27px;font-size:24.45px;color:#e5e9f0;font-family:'Liberation Mono', monospace;">results.b</div>
<div class="t" style="left:1795.00px;top:1190.52px;font-size:21.0px;color:#eceff4;text-decoration:underline;text-underline-offset:3px;text-decoration-thickness:1.5px;">Help </div>
<svg class="i" style="left:1860px;top:1198px;" viewBox="0 0 20 12" width="20" height="12" preserveAspectRatio="none" fill="none" stroke="#eceff4" stroke-width="2.2" stroke-linecap="round" stroke-linejoin="round"><path d="M2 2 L10 10 L18 2"/></svg>
<div class="b" style="left:1936px;top:857px;width:342px;height:42px;background:#bfdbfe;border-radius:9px;"></div>
<svg class="i" style="left:1955px;top:869px;" viewBox="0 0 20 19" width="20" height="19" preserveAspectRatio="none" fill="none" stroke="#1e40af" stroke-width="2.6" stroke-linecap="round" stroke-linejoin="round"><path d="M9.5 1.5 L1.5 9.5 L9.5 17.5 M1.5 9.5 H18.5"/></svg>
<div class="t" style="left:1983.50px;top:864.86px;font-size:26.5px;color:#1e40af;">Edit or connect an input</div>
<div class="b" style="left:1936px;top:913px;width:552px;height:52px;background:#2e3440;border:2px solid #4f5664;border-radius:9px;"></div>
<div class="t" style="left:1952.00px;top:926.78px;font-size:25.3px;color:#a3a8b2;">Search prop...</div>
<div class="b" style="left:1923px;top:979px;width:563px;height:380px;background:#3b4252;"></div>
<div class="b" style="left:2486px;top:979px;width:14px;height:287px;background:#6b7080;"></div>
<div class="b" style="left:2486px;top:1266px;width:14px;height:93px;background:#3b4252;"></div>
<div class="t" style="left:1936.00px;top:998.50px;font-size:24.8px;color:#eceff4;font-weight:700;">Flow Input</div>
<div class="t" style="left:1950.50px;top:1040.80px;font-size:20.9px;color:#d8dee9;">No items ([])</div>
<div class="t" style="left:1936.00px;top:1092.67px;font-size:24.6px;color:#eceff4;font-weight:700;">Previous Result</div>
<div class="b" style="left:1950px;top:1125px;width:51px;height:38px;background:#c7d2fe;border:2px solid #3b6fe0;border-radius:7px;"></div>
<div class="t" style="left:1969.00px;top:1133.37px;font-size:22px;color:#312e81;font-weight:700;">b</div>
<div class="t" style="left:2007.00px;top:1132.87px;font-size:22px;color:#eceff4;font-weight:700;">:</div>
<div class="b" style="left:2022px;top:1126px;width:55px;height:33px;background:transparent;border:2px solid #3b6fe0;border-radius:7px;"></div>
<div class="t" style="left:2031.00px;top:1130.49px;font-size:26px;color:#eceff4;">[...]</div>
<div class="t" style="left:2084.00px;top:1132.45px;font-size:22.5px;color:#d8dee9;">30 items</div>
<div class="t" style="left:1936.00px;top:1187.34px;font-size:24.4px;color:#eceff4;font-weight:700;">All Results</div>
<div class="b" style="left:1936px;top:1221px;width:61px;height:37px;background:transparent;border:2px solid #3b6fe0;border-radius:7px;"></div>
<div class="t" style="left:1946.00px;top:1224.87px;font-size:28.5px;color:#eceff4;">{...}</div>
<div class="t" style="left:2005.00px;top:1231.13px;font-size:21.7px;color:#d8dee9;">2 keys</div>
<div class="t" style="left:1936.00px;top:1283.49px;font-size:25.4px;color:#eceff4;font-weight:700;">Variables</div>
<div class="b" style="left:1936px;top:1317px;width:61px;height:53px;background:transparent;border:2px solid #3b6fe0;border-radius:7px;"></div>
<div class="t" style="left:1946.00px;top:1321.87px;font-size:28.5px;color:#eceff4;">{...}</div>
<div class="b" style="left:84px;top:1357px;width:965px;height:2px;background:#4f5666;"></div>
<svg class="i" style="left:31px;top:126px;" viewBox="3 1 18 22" width="22" height="27" preserveAspectRatio="none" fill="none" stroke="#ffffff" stroke-width="2" stroke-linecap="round" stroke-linejoin="round"><rect width="16" height="20" x="4" y="2" rx="2" ry="2"/><path d="M9 22v-4h6v4"/><path d="M8 6h.01M16 6h.01M12 6h.01M12 10h.01M12 14h.01M16 10h.01M16 14h.01M8 10h.01M8 14h.01"/></svg>
<svg class="i" style="left:29px;top:195px;" viewBox="0 0 26 29" width="26" height="29" preserveAspectRatio="none" fill="#ffffff"><circle cx="13" cy="7.5" r="7"/><path d="M0.5 27 C0.5 20.5 6 16.5 13 16.5 S25.5 20.5 25.5 27 a1.5 1.5 0 0 1 -1.5 1.5 h-22 a1.5 1.5 0 0 1 -1.5 -1.5z"/></svg>
<svg class="i" style="left:29px;top:265px;" viewBox="0 0 25.5 26" width="26" height="26" preserveAspectRatio="none" fill="#ffffff"><path d="M12.75 2.80 L16.45 9.20 L23.69 10.75 L18.74 16.25 L19.51 23.60 L12.75 20.60 L5.99 23.60 L6.76 16.25 L1.81 10.75 L9.05 9.20Z" stroke="#fff" stroke-width="3.2" stroke-linejoin="round"/></svg>
<svg class="i" style="left:29px;top:336px;" viewBox="1 2 22 20" width="26" height="24" preserveAspectRatio="none" fill="none" stroke="#ffffff" stroke-width="2" stroke-linecap="round" stroke-linejoin="round"><path d="M16 21v-2a4 4 0 0 0-4-4H6a4 4 0 0 0-4 4v2"/><circle cx="9" cy="7" r="4"/><path d="M22 21v-2a4 4 0 0 0-3-3.87"/><path d="M16 3.13a4 4 0 0 1 0 7.75"/></svg>
<svg class="i" style="left:28px;top:448px;" viewBox="0 0 28 26" width="28" height="26" preserveAspectRatio="none" fill="#ffffff"><path d="M14 0.5 L27.5 12.5 a1 1 0 0 1 -0.7 1.8 H24 V24 a1.8 1.8 0 0 1 -1.8 1.8 H17.5 V18 a1 1 0 0 0 -1 -1 h-5 a1 1 0 0 0 -1 1 V25.8 H5.8 A1.8 1.8 0 0 1 4 24 V14.3 H1.2 a1 1 0 0 1 -0.7 -1.8 Z"/></svg>
<svg class="i" style="left:31px;top:510px;" viewBox="0 0 22 26" width="22" height="26" preserveAspectRatio="none" fill="#ffffff"><path d="M3 1.5 C1.5 0.8 0.5 1.5 0.5 3 V23 C0.5 24.5 1.5 25.2 3 24.5 L20.5 14.5 C21.8 13.7 21.8 12.3 20.5 11.5 Z"/></svg>
<svg class="i" style="left:33px;top:572px;" viewBox="0 0 18 28" width="18" height="28" preserveAspectRatio="none" fill="none" stroke="#ffffff" stroke-width="3" stroke-linecap="round" stroke-linejoin="round"><path d="M15.5 7 C14.5 5 12.5 4.3 9.5 4.3 C6 4.3 3.5 5.8 3.5 8.6 C3.5 14.5 15 12 15 18.6 C15 21.6 12.5 23.4 9 23.4 C6 23.4 3.8 22.5 2.5 20.5 M9 1.5 V26.5"/></svg>
<svg class="i" style="left:27.5px;top:635px;" viewBox="-0.5 -0.5 29.4 25.4" width="29.0" height="26.5" preserveAspectRatio="none" fill="none"><g transform="translate(7.0 0) scale(0.72)"><path d="M9.8 0.3 L19.6 3.9 Q20 4.1 20 4.6 V14.2 Q20 14.7 19.6 14.9 L10.3 19 Q9.8 19.2 9.3 19 L0.4 14.9 Q0 14.7 0 14.2 V4.6 Q0 4.1 0.4 3.9 Z" fill="#fff" stroke="#1f232e" stroke-width="1.6"/><path d="M4.6 4.8 L9.8 2.5 L15.5 4.8 L9.8 7.3 Z M11.7 8.7 L17 6.3 V14.2 L11.7 16.8 Z" fill="#1f232e"/></g><g transform="translate(0 11.0) scale(0.72)"><path d="M9.8 0.3 L19.6 3.9 Q20 4.1 20 4.6 V14.2 Q20 14.7 19.6 14.9 L10.3 19 Q9.8 19.2 9.3 19 L0.4 14.9 Q0 14.7 0 14.2 V4.6 Q0 4.1 0.4 3.9 Z" fill="#fff" stroke="#1f232e" stroke-width="1.6"/><path d="M4.6 4.8 L9.8 2.5 L15.5 4.8 L9.8 7.3 Z M11.7 8.7 L17 6.3 V14.2 L11.7 16.8 Z" fill="#1f232e"/></g><g transform="translate(14.0 11.0) scale(0.72)"><path d="M9.8 0.3 L19.6 3.9 Q20 4.1 20 4.6 V14.2 Q20 14.7 19.6 14.9 L10.3 19 Q9.8 19.2 9.3 19 L0.4 14.9 Q0 14.7 0 14.2 V4.6 Q0 4.1 0.4 3.9 Z" fill="#fff" stroke="#1f232e" stroke-width="1.6"/><path d="M4.6 4.8 L9.8 2.5 L15.5 4.8 L9.8 7.3 Z M11.7 8.7 L17 6.3 V14.2 L11.7 16.8 Z" fill="#1f232e"/></g></svg>
<svg class="i" style="left:29px;top:759px;" viewBox="0 0 26 29" width="26" height="29" preserveAspectRatio="none" fill="#ffffff"><rect x="0.5" y="4" width="25" height="24.5" rx="3"/><rect x="5" y="0" width="3.2" height="7" rx="1.5"/><rect x="17.8" y="0" width="3.2" height="7" rx="1.5"/></svg>
<svg class="i" style="left:27px;top:821px;" viewBox="0 0 30 23" width="30" height="23" preserveAspectRatio="none" fill="#ffffff"><path d="M0.5 3 a2.5 2.5 0 0 1 2.5 -2.5 h7 l3 3 h9 a2.5 2.5 0 0 1 2.5 2.5 v2 H8 a3 3 0 0 0 -2.8 1.8 L0.5 19z"/><path d="M6.5 9.5 H28.5 a1 1 0 0 1 0.9 1.4 L24.5 21.5 a2.5 2.5 0 0 1 -2.3 1.5 H1.5 a1 1 0 0 1 -0.9 -1.4z"/></svg>
<svg class="i" style="left:27px;top:880px;" viewBox="0 0 28.3 23" width="29" height="23" preserveAspectRatio="none" fill="#ffffff"><circle cx="6.25" cy="3.7" r="3.6"/><circle cx="22.4" cy="3.7" r="3.5"/><path d="M0 14 C0 10.5 2.5 8.8 6 8.8 h1 C8.5 8.8 9.9 10.5 9.9 14 Z"/><path d="M19 12.5 C19.5 9.8 21 8.8 23 8.8 C26 8.8 27.8 10.5 27.8 13 Z"/><circle cx="14" cy="9.9" r="4.4" stroke="#1f232e" stroke-width="1"/><path d="M5.5 22.8 C5.5 18 8.5 15 12.5 15 h3 C18 15 20.2 17 20.2 19 V22.8 Z"/><path d="M20.67 13.21 L20.95 11.80 L23.05 11.80 L23.33 13.21 L24.88 14.10 L26.24 13.64 L27.29 15.46 L26.21 16.41 L26.21 18.19 L27.29 19.14 L26.24 20.96 L24.88 20.50 L23.33 21.39 L23.05 22.80 L20.95 22.80 L20.67 21.39 L19.12 20.50 L17.76 20.96 L16.71 19.14 L17.79 18.19 L17.79 16.41 L16.71 15.46 L17.76 13.64 L19.12 14.10Z" stroke="#1f232e" stroke-width="1.4" stroke-linejoin="round"/><path d="M20.67 13.21 L20.95 11.80 L23.05 11.80 L23.33 13.21 L24.88 14.10 L26.24 13.64 L27.29 15.46 L26.21 16.41 L26.21 18.19 L27.29 19.14 L26.24 20.96 L24.88 20.50 L23.33 21.39 L23.05 22.80 L20.95 22.80 L20.67 21.39 L19.12 20.50 L17.76 20.96 L16.71 19.14 L17.79 18.19 L17.79 16.41 L16.71 15.46 L17.76 13.64 L19.12 14.10Z"/><circle cx="22" cy="17.3" r="1.4" fill="#1f232e"/></svg>
<svg class="i" style="left:27px;top:939px;" viewBox="0 0 28.3 21.7" width="29" height="22" preserveAspectRatio="none" fill="#ffffff"><path d="M0 10.7 C3.5 3.5 8.5 0 14.1 0 S24.8 3.5 28.3 10.7 C24.8 18 19.7 21.7 14.1 21.7 S3.5 18 0 10.7Z"/><circle cx="14" cy="10.8" r="6.1" fill="none" stroke="#1f232e" stroke-width="1.5"/><circle cx="12" cy="8.6" r="2.1" fill="#1f232e"/></svg>
<svg class="i" style="left:28px;top:995px;" viewBox="0 0 28 28.5" width="28" height="29" preserveAspectRatio="none" fill="#ffffff"><path d="M24.58 12.06 L27.89 12.50 L27.89 16.00 L24.58 16.44 L23.03 20.18 L25.06 22.83 L22.58 25.31 L19.93 23.28 L16.19 24.83 L15.75 28.14 L12.25 28.14 L11.81 24.83 L8.07 23.28 L5.42 25.31 L2.94 22.83 L4.97 20.18 L3.42 16.44 L0.11 16.00 L0.11 12.50 L3.42 12.06 L4.97 8.32 L2.94 5.67 L5.42 3.19 L8.07 5.22 L11.81 3.67 L12.25 0.36 L15.75 0.36 L16.19 3.67 L19.93 5.22 L22.58 3.19 L25.06 5.67 L23.03 8.32Z" stroke="#fff" stroke-width="1.6" stroke-linejoin="round"/><circle cx="14" cy="14.25" r="4.3" fill="#1f232e"/></svg>
<svg class="i" style="left:27px;top:1056px;" viewBox="0 0 30 25" width="30" height="25" preserveAspectRatio="none" fill="#ffffff"><rect x="14" y="0" width="2" height="5"/><rect x="5" y="5" width="20" height="19.5" rx="4"/><rect x="0.5" y="11" width="3" height="8" rx="1.5"/><rect x="26.5" y="11" width="3" height="8" rx="1.5"/><circle cx="10.5" cy="12.5" r="2" fill="#1f232e"/><circle cx="19.5" cy="12.5" r="2" fill="#1f232e"/><path d="M10 19.5 h10" stroke="#1f232e" stroke-width="1.6" stroke-dasharray="2 2"/></svg>
<svg class="i" style="left:27px;top:1182px;" viewBox="0 0 30 20" width="30" height="20" preserveAspectRatio="none" fill="#ffffff"><path d="M1 4 C1 1.5 2.5 0.5 5 0.5 C9 0.5 12 1 14.2 2.2 V19.5 H2.5 A1.5 1.5 0 0 1 1 18z"/><path d="M29 4 C29 1.5 27.5 0.5 25 0.5 C21 0.5 18 1 15.8 2.2 V19.5 H27.5 A1.5 1.5 0 0 0 29 18z"/></svg>
<svg class="i" style="left:28px;top:1222px;" viewBox="0 0 27 27" width="27" height="27" preserveAspectRatio="none" fill="none" stroke="#ffffff" stroke-width="2.4" stroke-linecap="round" stroke-linejoin="round"><circle cx="13.5" cy="13.5" r="5.2"/><path d="M13.5 1.5 v3 M13.5 22.5 v3 M1.5 13.5 h3 M22.5 13.5 h3 M5 5 l2.1 2.1 M19.9 19.9 l2.1 2.1 M5 22 l2.1 -2.1 M19.9 7.1 l2.1 -2.1"/></svg>
<svg class="i" style="left:29px;top:1304px;" viewBox="0 0 26 22" width="26" height="22" preserveAspectRatio="none" fill="none" stroke="#ffffff" stroke-width="3.4" stroke-linecap="round" stroke-linejoin="round"><path d="M2 11 H23.5 M14 2 L23.5 11 L14 20"/></svg>
</body></html>
